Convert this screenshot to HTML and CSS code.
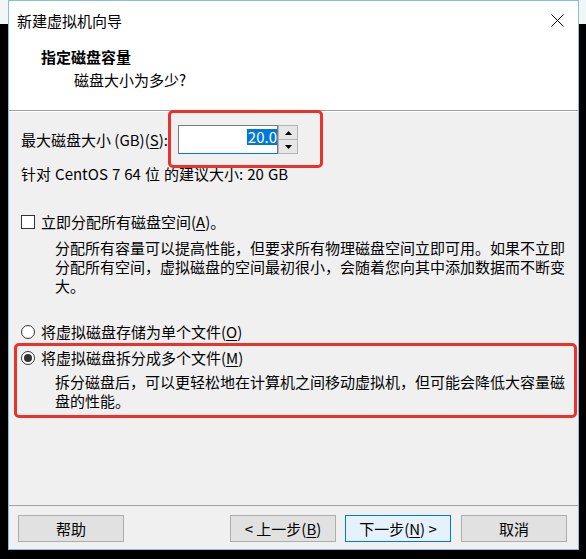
FILE: index.html
```html
<!DOCTYPE html>
<html lang="zh-CN">
<head>
<meta charset="utf-8">
<title>新建虚拟机向导</title>
<link rel="stylesheet" href="styles.css">
</head>
<body>
<div class="window">
  <div class="top">
    <div class="titlebar">
      <span class="title">新建虚拟机向导</span>
      <svg class="close" width="13" height="13" viewBox="0 0 13 13"><path d="M0.5 0.5 L12.5 12.5 M12.5 0.5 L0.5 12.5" stroke="#000" stroke-width="1" fill="none"/></svg>
    </div>
    <div class="header">
      <div class="h-title">指定磁盘容量</div>
      <div class="h-sub">磁盘大小为多少?</div>
    </div>
  </div>
  <div class="sep"></div>
  <div class="content">
    <div class="size-row">
      <span class="size-label">最大磁盘大小 (GB)(<u>S</u>):</span>
      <div class="spin">
        <div class="spin-input"><span class="sel">20.0</span></div>
        <div class="spin-btns">
          <div class="spin-btn"><svg width="7" height="4" viewBox="0 0 7 4"><path d="M3.5 0 L7 4 L0 4 Z" fill="#000"/></svg></div>
          <div class="spin-btn"><svg width="7" height="4" viewBox="0 0 7 4"><path d="M0 0 L7 0 L3.5 4 Z" fill="#000"/></svg></div>
        </div>
      </div>
    </div>
    <div class="hint">针对 CentOS 7 64 位 的建议大小: 20 GB</div>
    <label class="check-row"><span class="checkbox"></span><span>立即分配所有磁盘空间(<u>A</u>)。</span></label>
    <p class="desc">分配所有容量可以提高性能，但要求所有物理磁盘空间立即可用。如果不立即分配所有空间，虚拟磁盘的空间最初很小，会随着您向其中添加数据而不断变大。</p>
    <label class="radio-row first"><span class="radio"></span><span>将虚拟磁盘存储为单个文件(<u>O</u>)</span></label>
    <label class="radio-row second"><span class="radio on"></span><span>将虚拟磁盘拆分成多个文件(<u>M</u>)</span></label>
    <p class="desc desc2">拆分磁盘后，可以更轻松地在计算机之间移动虚拟机，但可能会降低大容量磁盘的性能。</p>
  </div>
  <div class="footer">
    <div class="buttons">
      <div class="btn help">帮助</div>
      <div class="btn back">&lt; 上一步(<u>B</u>)</div>
      <div class="btn next">下一步(<u>N</u>) &gt;</div>
      <div class="btn">取消</div>
    </div>
  </div>
</div>
<div class="mark mark1"></div>
<div class="mark mark2"></div>
</body>
</html>
```

FILE: styles.css
```css
* { box-sizing: border-box; }
html, body { margin: 0; padding: 0; }
body {
  width: 586px;
  height: 559px;
  overflow: hidden;
  position: relative;
  background: linear-gradient(#f3f6f9 0, #f3f6f9 24px, #000 24px);
  font-family: "Noto Sans CJK SC", "Microsoft YaHei", sans-serif;
  font-size: 15px;
  color: #000;
}
u { text-decoration: underline; text-underline-offset: 2px; }
.window {
  margin-left: 8px;
  width: 571px;
  height: 550px;
  border: 1px solid #86bde6;
  background: #f0f0f0;
  display: flex;
  flex-direction: column;
}
.top { background: #fff; }
.titlebar {
  height: 40px;
  display: flex;
  align-items: center;
  justify-content: space-between;
  padding: 0 14px 0 8px;
}
.title { line-height: 20px; }
.close { display: block; margin-top: -2px; }
.header { padding: 6px 0 20px 0; }
.h-title { font-weight: bold; line-height: 20px; padding-left: 32px; }
.h-sub { line-height: 20px; margin-top: 3px; padding-left: 65px; }
.sep { border-top: 1px solid #a0a0a0; border-bottom: 1px solid #fff; }
.content { padding-left: 12px; }
.size-row {
  display: flex;
  align-items: center;
  margin-top: 13px;
  height: 29px;
}
.size-label { width: 157px; line-height: 20px; }
.spin { display: flex; height: 29px; }
.spin-input {
  width: 100px;
  height: 29px;
  background: #fff;
  border: 1px solid #7a7a7a;
  border-bottom-color: #0078d7;
  display: flex;
  align-items: center;
  justify-content: flex-end;
}
.sel {
  background: #0078d7;
  color: #fff;
  line-height: 16px;
  height: 16px;
  padding: 0 0 0 1px;
  margin-top: -5px;
}
.spin-btns { width: 20px; display: flex; flex-direction: column; }
.spin-btn {
  flex: 1;
  background: #e6e6e6;
  border: 1px solid #b4b4b4;
  display: flex;
  align-items: center;
  justify-content: center;
}
.spin-btn + .spin-btn { border-top: none; }
.hint { line-height: 20px; margin-top: 10px; word-spacing: 0.7px; }
.check-row, .radio-row {
  display: flex;
  align-items: center;
  line-height: 20px;
  height: 20px;
}
.check-row { margin-top: 28px; }
.checkbox {
  width: 14px;
  height: 14px;
  border: 1px solid #333;
  background: #fff;
  margin-right: 6px;
}
.desc {
  margin: 6px 0 0 0;
  padding-left: 34px;
  width: 546px;
  line-height: 19px;
}
.radio-row.first { margin-top: 27px; }
.radio-row.second { margin-top: 6px; }
.radio {
  width: 14px;
  height: 14px;
  border: 1px solid #333;
  border-radius: 50%;
  background: #fff;
  margin-right: 6px;
  display: flex;
  align-items: center;
  justify-content: center;
}
.radio.on::after {
  content: "";
  width: 8px;
  height: 8px;
  border-radius: 50%;
  background: #333;
}
.desc2 { margin-top: 4px; }
.footer {
  margin-top: auto;
  border-top: 1px solid #a0a0a0;
  padding: 9px 11px 7px 9px;
}
.buttons { display: flex; gap: 9px; }
.btn {
  width: 106px;
  height: 27px;
  background: #e1e1e1;
  border: 1px solid #adadad;
  display: flex;
  align-items: center;
  justify-content: center;
  line-height: 20px;
}
.btn.help { margin-right: auto; }
.btn.next { background: #e5f1fb; border-color: #0078d7; margin-right: 1px; }
.mark {
  position: absolute;
  border: 3px solid #e8322b;
  border-radius: 5px;
}
.mark1 { left: 168px; top: 110px; width: 155px; height: 58px; }
.mark2 { left: 14px; top: 343px; width: 563px; height: 75px; }
```
